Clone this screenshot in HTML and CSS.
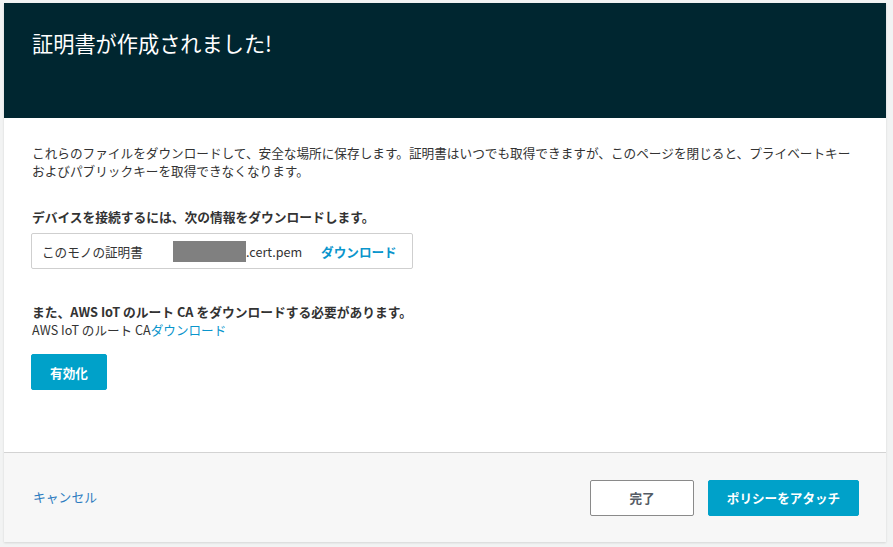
FILE: index.html
```html
<!DOCTYPE html>
<html lang="ja">
<head>
<meta charset="utf-8">
<title>証明書が作成されました!</title>
<link rel="stylesheet" href="styles.css">
</head>
<body>
<div class="card">
  <header class="card-header">
    <h1 class="title">証明書が作成されました!</h1>
  </header>
  <section class="card-body">
    <p class="intro">これらのファイルをダウンロードして、安全な場所に保存します。証明書はいつでも取得できますが、このページを閉じると、プライベートキー<br>およびパブリックキーを取得できなくなります。</p>
    <p class="heading">デバイスを接続するには、次の情報をダウンロードします。</p>
    <div class="file-box">
      <span class="file-label">このモノの証明書</span>
      <span class="file-name"><span class="redact"></span>.cert.pem</span>
      <a class="link" href="#">ダウンロード</a>
    </div>
    <p class="heading heading-ca">また、AWS IoT のルート CA をダウンロードする必要があります。</p>
    <p class="ca-line">AWS IoT のルート CA<a class="link" href="#">ダウンロード</a></p>
    <button class="btn btn-primary btn-activate">有効化</button>
  </section>
  <footer class="card-footer">
    <a class="cancel" href="#">キャンセル</a>
    <div class="actions">
      <button class="btn btn-secondary">完了</button>
      <button class="btn btn-primary btn-attach">ポリシーをアタッチ</button>
    </div>
  </footer>
</div>
</body>
</html>
```
FILE: styles.css
```css
* { box-sizing: border-box; }
html, body { margin: 0; }
body {
  background: #f2f3f3;
  padding: 3px 7px 5px 4px;
  font-family: "Noto Sans CJK JP", "Noto Sans", sans-serif;
  color: #333;
  font-size: 12.6px;
}
.card {
  width: 882px;
  height: 539px;
  background: #fff;
  display: flex;
  flex-direction: column;
  box-shadow: 0 1px 2px rgba(0,0,0,0.12);
}
.card-header {
  background: #002630;
  height: 115px;
  flex: none;
  padding: 26px 28px 0;
}
.title {
  margin: 0;
  font-weight: 400;
  font-size: 21.2px;
  line-height: 28px;
  color: #fff;
}
.card-body {
  flex: 1;
  padding: 26px 27px 0 28px;
}
.intro {
  margin: 0;
  line-height: 18px;
  font-size: 12.65px;
  white-space: nowrap;
}
.heading {
  margin: 28px 0 0;
  font-weight: 700;
  font-size: 12.75px;
  line-height: 18px;
}
.file-box {
  margin: 7px 0 0 -1px;
  width: 382px;
  height: 36px;
  border: 1px solid #cfcfcf;
  border-radius: 2px;
  display: flex;
  align-items: center;
  padding-left: 10px;
}
.file-label { width: 131px; flex: none; color: #333; }
.file-name { display: flex; align-items: center; color: #333; }
.redact {
  display: inline-block;
  width: 73px;
  height: 21px;
  background: #808080;
}
.file-box .link { margin-left: 19px; font-weight: 700; }
.link {
  color: #0a95cc;
  text-decoration: none;
}
.heading-ca { margin-top: 34px; }
.ca-line { margin: 0; line-height: 18px; }
.btn {
  font-family: inherit;
  font-size: 12.6px;
  font-weight: 700;
  height: 36px;
  border-radius: 2px;
  cursor: pointer;
}
.btn-primary {
  background: #00a1c9;
  color: #fff;
  border: 1px solid #00a1c9;
}
.btn-activate {
  margin: 15px 0 0 -1px;
  width: 76px;
  padding: 0;
}
.card-footer {
  height: 90px;
  flex: none;
  background: #f7f7f7;
  border-top: 1px solid #d3d3d3;
  display: flex;
  align-items: center;
  justify-content: space-between;
  padding: 0 27px 0 29px;
}
.cancel {
  color: #2d7cc0;
  text-decoration: none;
  font-size: 12.8px;
  margin-top: -2px;
}
.actions { display: flex; gap: 14px; }
.btn-secondary {
  width: 104px;
  background: #fff;
  border: 1px solid #8a8a8a;
  color: #545b64;
}
.btn-attach { width: 151px; }
```
